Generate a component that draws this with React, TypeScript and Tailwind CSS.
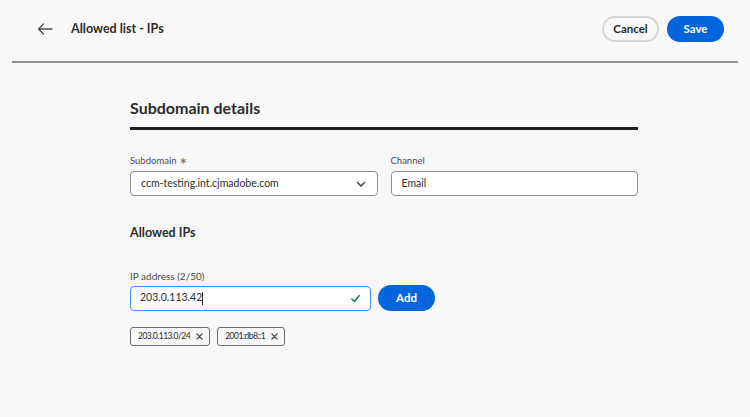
import React from 'react';

const font = { fontFamily: 'Lato, "Noto Sans", sans-serif' };

const Chevron = () => (
  <svg width="12" height="12" viewBox="0 0 12 12" fill="none">
    <path d="M2.5 4.5 6 8l3.5-3.5" stroke="#4b4b4b" strokeWidth="1.6" strokeLinecap="round" strokeLinejoin="round" />
  </svg>
);

const Cross = () => (
  <svg width="7" height="7" viewBox="0 0 8 8" fill="none">
    <path d="M1 1l6 6M7 1 1 7" stroke="#3a3a3a" strokeWidth="1.4" strokeLinecap="round" />
  </svg>
);

const Tag = ({ label }: { label: string }) => (
  <div className="flex items-center gap-[6px] h-[19px] pl-[7px] pr-[6px] border border-[#6e6e6e] rounded-[3px] bg-[#f8f8f8] text-[8.5px] tracking-[-0.5px] text-[#2c2c2c]">
    <span>{label}</span>
    <Cross />
  </div>
);

export default function App() {
  return (
    <div className="w-[750px] h-[417px] bg-[#f8f8f8] overflow-hidden" style={font}>
      {/* header */}
      <div className="flex items-center h-[61px] pl-[37px] pr-[26px] pb-[3px]">
        <svg width="16" height="12" viewBox="0 0 16 12" fill="none">
          <path d="M15 6H1.5M6.5 1 1.5 6l5 5" stroke="#4b4b4b" strokeWidth="1.3" strokeLinecap="round" strokeLinejoin="round" />
        </svg>
        <h1 className="ml-[18px] text-[12.5px] font-bold text-[#2c2c2c]">Allowed list - IPs</h1>
        <div className="ml-auto flex gap-[8px]">
          <button className="h-[26px] w-[57px] rounded-full border-2 border-[#d5d5d5] bg-[#f8f8f8] text-[11.5px] font-bold text-[#2c2c2c]">Cancel</button>
          <button className="h-[26px] w-[57px] rounded-full bg-[#0265dc] text-[11.5px] font-bold text-white">Save</button>
        </div>
      </div>
      <div className="mx-[12px] h-[2px] bg-[#8f8f8f]" />

      {/* body */}
      <div className="pl-[130px] w-[638px] pt-[33px]">
        <h2 className="text-[16px] font-bold text-[#2c2c2c] leading-[24px]">Subdomain details</h2>
        <div className="mt-[7px] h-[3px] bg-[#222222]" />

        <div className="mt-[25px] grid grid-cols-2 gap-[13px]">
          <div>
            <div className="text-[9.5px] text-[#4b4b4b] leading-[12px]">Subdomain <span className="text-[#6e6e6e]">∗</span></div>
            <div className="mt-[4px] h-[25px] flex items-center justify-between px-[10px] bg-white border border-[#8f8f8f] rounded-[4px] text-[10.5px] text-[#2c2c2c]">
              <span>ccm-testing.int.cjmadobe.com</span>
              <Chevron />
            </div>
          </div>
          <div>
            <div className="text-[9.5px] text-[#4b4b4b] leading-[12px]">Channel</div>
            <div className="mt-[4px] h-[25px] flex items-center px-[10px] bg-white border border-[#8f8f8f] rounded-[4px] text-[10.5px] text-[#2c2c2c]">
              Email
            </div>
          </div>
        </div>

        <h3 className="mt-[28px] text-[12.5px] font-bold text-[#2c2c2c] leading-[18px]">Allowed IPs</h3>

        <div className="mt-[28px] text-[10px] text-[#4b4b4b] leading-[12px]">IP address (2/50)</div>
        <div className="mt-[3px] flex items-center gap-[7px]">
          <div className="w-[241px] h-[25px] flex items-center justify-between px-[9px] bg-white border border-[#378ef0] rounded-[4px] text-[10.5px] text-[#2c2c2c]">
            <span className="flex items-center">203.0.113.42<span className="inline-block w-px h-[13px] bg-[#2c2c2c]" /></span>
            <svg width="11" height="11" viewBox="0 0 12 12" fill="none">
              <path d="M2 6.5 4.8 9.2 10 2.8" stroke="#12805c" strokeWidth="1.7" strokeLinecap="round" strokeLinejoin="round" />
            </svg>
          </div>
          <button className="h-[26px] w-[57px] rounded-full bg-[#0265dc] text-[11.5px] font-bold text-white">Add</button>
        </div>

        <div className="mt-[16px] flex gap-[7px]">
          <Tag label="203.0.113.0/24" />
          <Tag label="2001:db8::1" />
        </div>
      </div>
    </div>
  );
}
